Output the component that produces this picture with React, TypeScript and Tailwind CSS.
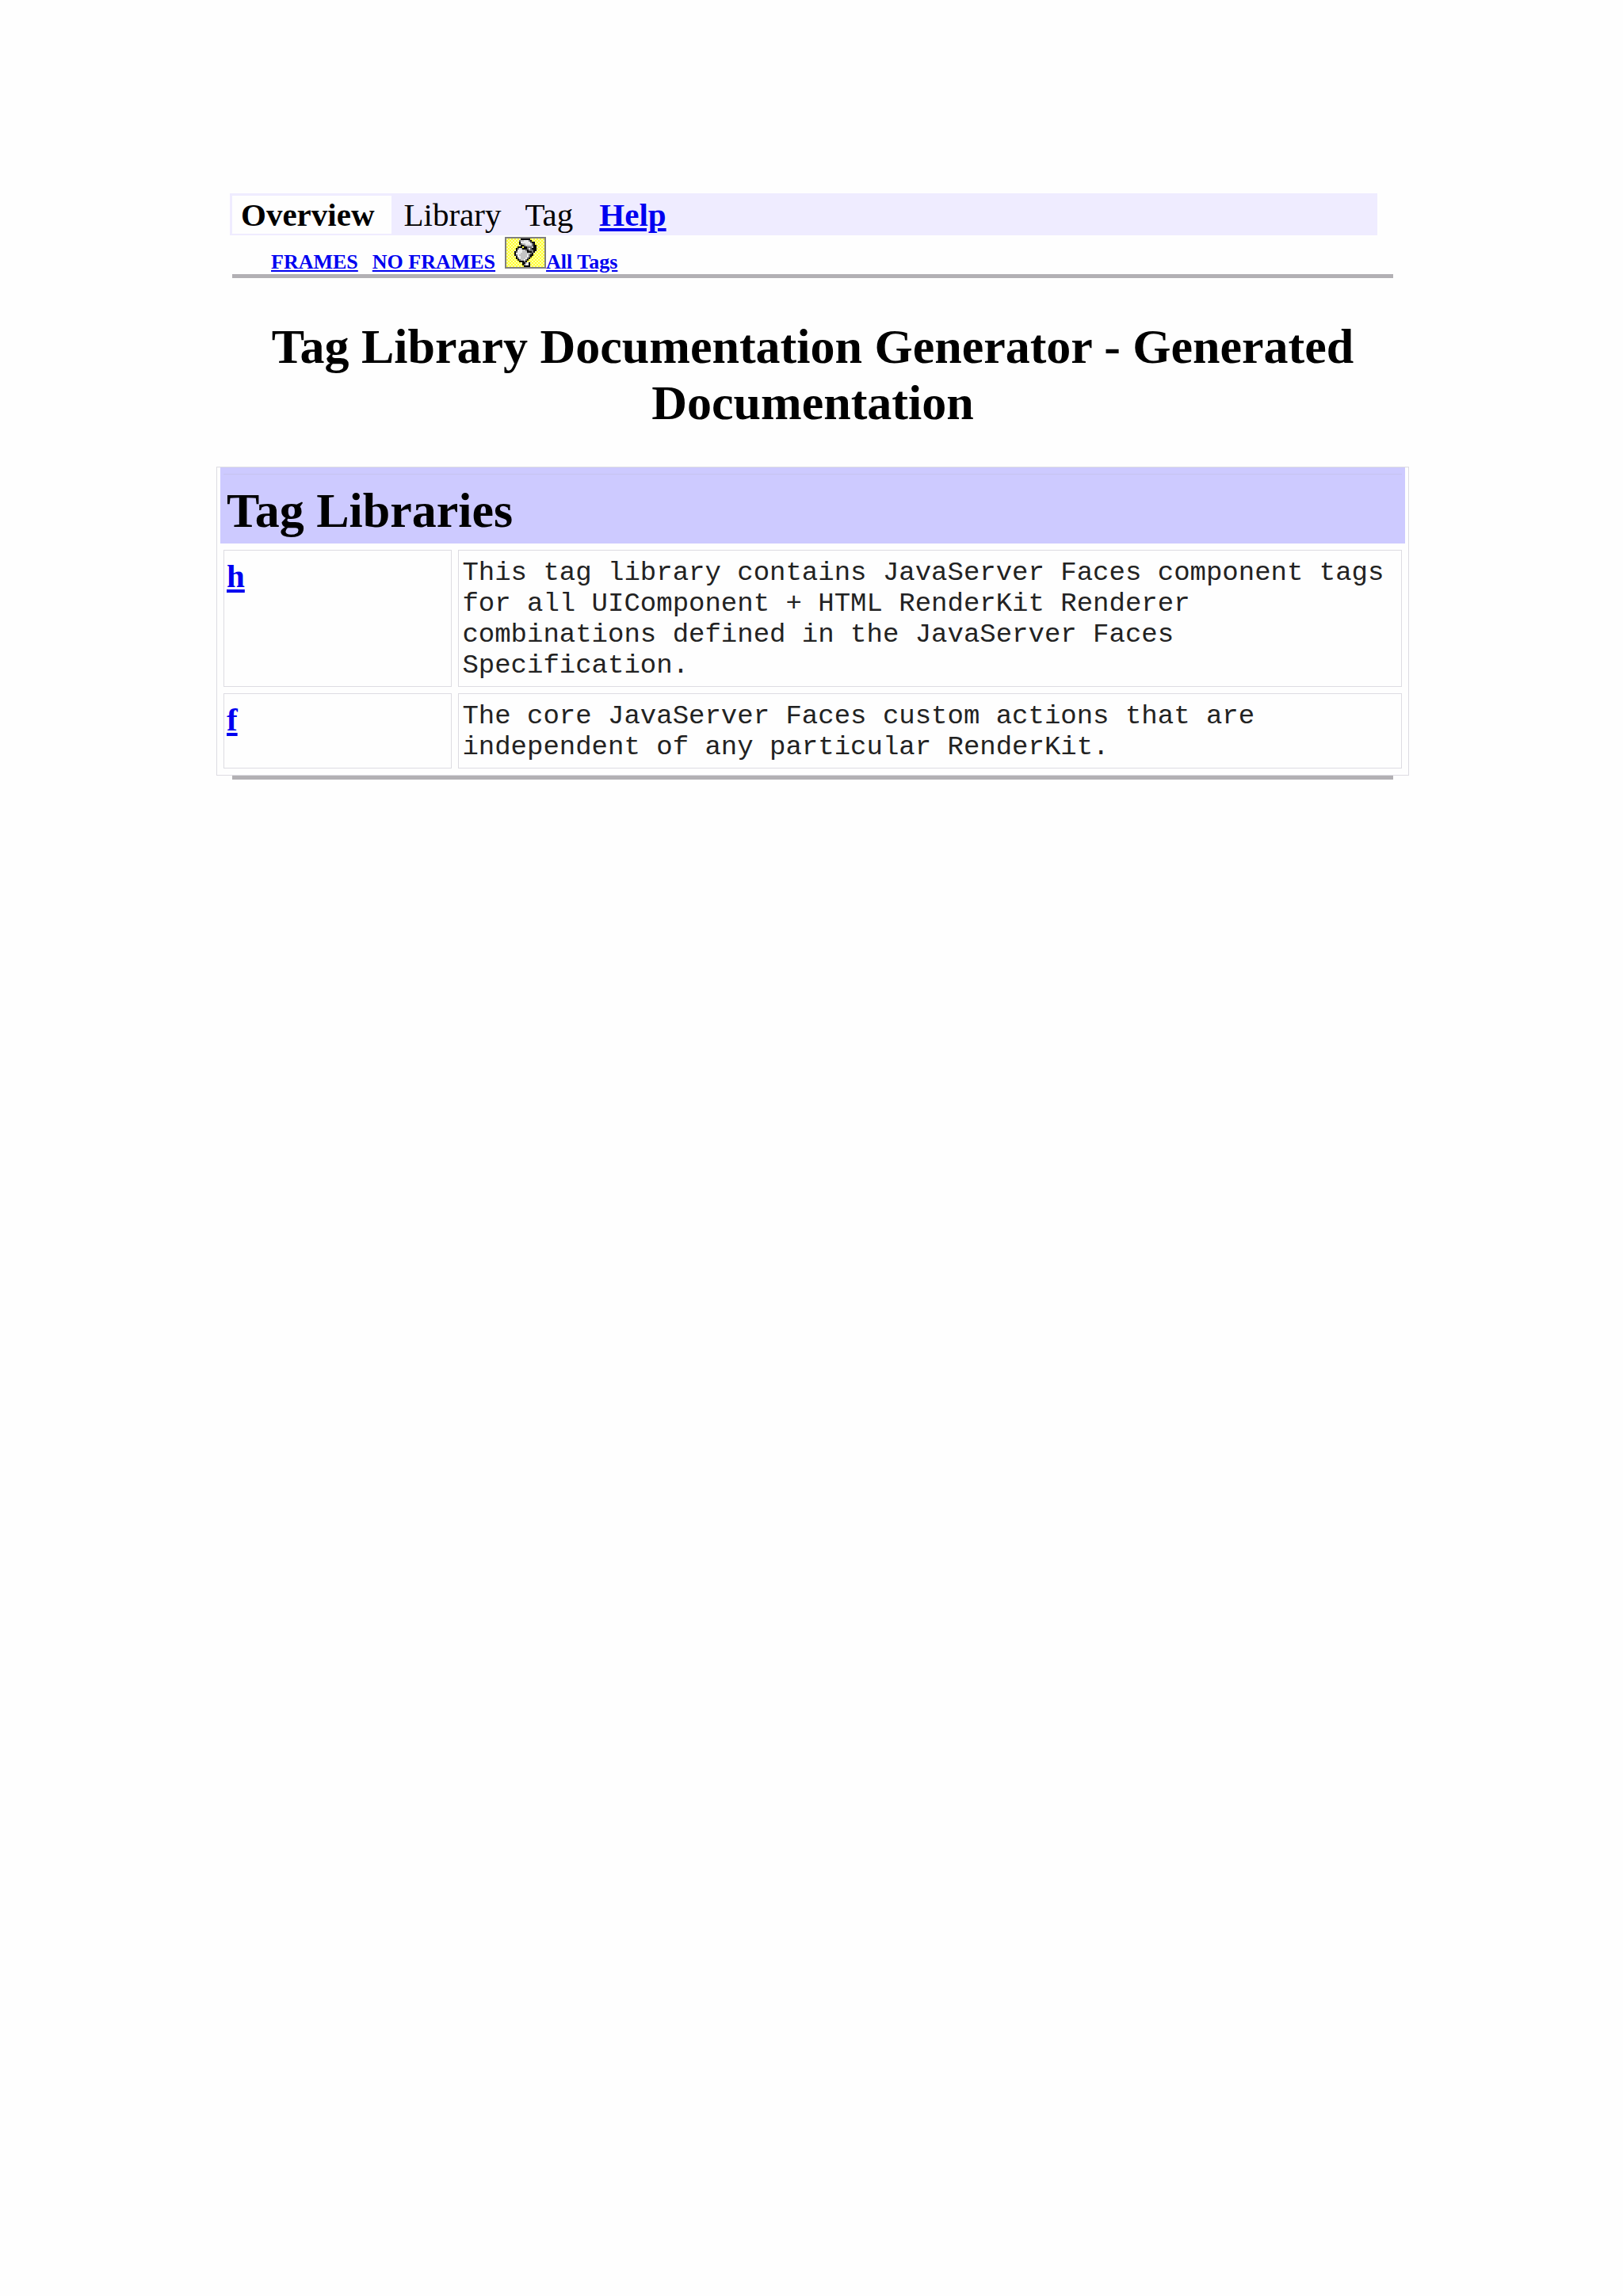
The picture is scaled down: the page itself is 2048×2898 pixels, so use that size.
const tabs = ["Library", "Tag"];

const libraries = [
  {
    prefix: "h",
    description:
      "This tag library contains JavaServer Faces component tags for all UIComponent + HTML RenderKit Renderer combinations defined in the JavaServer Faces Specification.",
  },
  {
    prefix: "f",
    description:
      "The core JavaServer Faces custom actions that are independent of any particular RenderKit.",
  },
];

// one character per icon pixel
const iconPixels = [
  "..........................",
  "..........######..........",
  ".........dggwwwd#.........",
  ".........#wwwwwwd##.......",
  ".........#dggwwwwd#.......",
  "..........##dggggd##......",
  "........###.##dddg##......",
  ".......#dwg###dwd###......",
  ".......#wwwggd#ddd##......",
  "......#dwwwggg###d#.......",
  "......#wwwggggggd#........",
  "......#dwgggggwd##........",
  ".......#wwggggwd#.........",
  ".......#dwgggwd#..........",
  "........#dggwd#...........",
  ".........###d#............",
  "...........##gw#..........",
  "...........#dww#..........",
  "............####..........",
  "..........................",
];

const iconColors: Record<string, string> = {
  "#": "#0a0a0a",
  w: "#ececec",
  g: "#c4c4c4",
  d: "#707070",
};

function TagsIcon() {
  return (
    <svg
      viewBox="0 0 26 20"
      className="w-[52px] h-[40px] shrink-0"
      shapeRendering="crispEdges"
      aria-hidden="true"
    >
      <defs>
        <pattern id="dither" width="2" height="2" patternUnits="userSpaceOnUse">
          <rect width="2" height="2" fill="#ffff33" />
          <rect width="1" height="1" fill="#ffffa8" />
          <rect x="1" y="1" width="1" height="1" fill="#ffffa8" />
        </pattern>
      </defs>
      <rect width="26" height="20" fill="#808080" />
      <rect x="1" y="1" width="24" height="18" fill="url(#dither)" />
      {iconPixels.map((row, y) =>
        row
          .split("")
          .map((c, x) =>
            c === "." ? null : (
              <rect key={`${x}-${y}`} x={x} y={y} width="1" height="1" fill={iconColors[c]} />
            )
          )
      )}
    </svg>
  );
}

export default function App() {
  return (
    <div className="min-h-screen bg-[#fefefe] pl-[273px] pr-[270px] pt-[244px] pb-16 text-black font-['Liberation_Serif','Times_New_Roman',serif]">
      <header className="ml-[17px] mr-5">
        <nav className="mr-5 flex h-[53px] items-center bg-[#efecff] pl-[3px] text-[41px] leading-[46px]">
          <span className="bg-[#fefefe] pt-px pb-px pl-[11px] pr-[22px] font-bold">Overview</span>
          {tabs.map((tab) => (
            <span key={tab} className="px-[15px]">
              {tab}
            </span>
          ))}
          <a href="#help" className="ml-[18px] font-bold text-[#0000f0] underline">
            Help
          </a>
        </nav>
        <div className="flex items-end pl-[52px] pt-[2px] text-[26px] leading-[30px] font-bold text-[#0000f0]">
          <a href="#frames" className="underline">
            FRAMES
          </a>
          <a href="#no-frames" className="ml-[18px] underline">
            NO FRAMES
          </a>
          <a href="#all-tags" className="ml-3 flex items-end">
            <span className="flex pb-[7px]">
              <TagsIcon />
            </span>
            <span className="underline">All Tags</span>
          </a>
        </div>
        <hr className="ml-[3px] h-[5px] border-0 bg-[#b2b0b4]" />
      </header>

      <main>
        <h1 className="mt-[51px] px-5 text-center text-[62px] leading-[71px] font-bold">
          Tag Library Documentation Generator - Generated Documentation
        </h1>

        <table className="mt-[45px] w-full table-fixed border-separate border-spacing-[8px] border border-[#dddce2] text-left">
          <colgroup>
            <col className="w-[19.5%]" />
            <col />
          </colgroup>
          <thead>
            <tr>
              <th
                colSpan={2}
                className="border-t border-[#c6c4ee] bg-[#cdcaff] px-1 pt-[10px] pb-[6px] text-[62px] leading-[71px] font-bold shadow-[0_-4px_0_4px_#cdcaff]"
              >
                Tag Libraries
              </th>
            </tr>
          </thead>
          <tbody>
            {libraries.map((lib) => (
              <tr key={lib.prefix} className="align-top">
                <td className="border border-[#dddce2] px-[3px] pt-[9px] text-[41px] leading-[47px] font-bold">
                  <a href={`#${lib.prefix}`} className="text-[#0000f0] underline">
                    {lib.prefix}
                  </a>
                </td>
                <td className="border border-[#dddce2] px-1 pt-[9px] pb-[6px] font-['Liberation_Mono','Courier_New',monospace] text-[34px] leading-[39px] text-[#222222]">
                  {lib.description}
                </td>
              </tr>
            ))}
          </tbody>
        </table>
        <hr className="mx-5 h-[5px] border-0 bg-[#b2b0b4]" />
      </main>
    </div>
  );
}
